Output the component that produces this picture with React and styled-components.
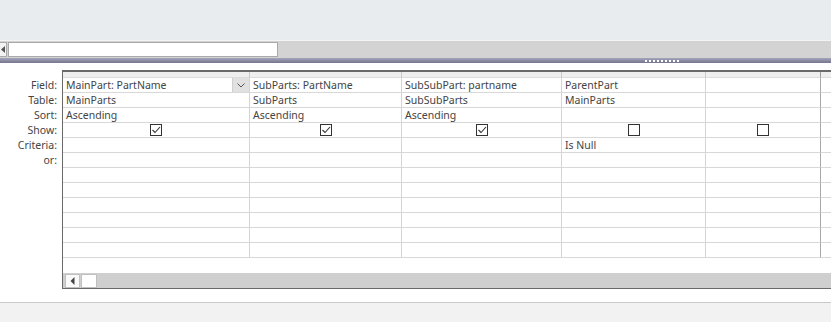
import React from 'react';
import styled, { createGlobalStyle } from 'styled-components';

const GlobalStyle = createGlobalStyle`
  html, body {
    margin: 0;
    padding: 0;
    background: #ffffff;
  }
  body {
    font-family: 'Segoe UI', 'Noto Sans', 'Liberation Sans', sans-serif;
    font-size: 10.5px;
    color: #444444;
  }
`;

const columns = [
  { width: 187, field: 'MainPart: PartName', table: 'MainParts', sort: 'Ascending', show: true, criteria: '', dropdown: true },
  { width: 152, field: 'SubParts: PartName', table: 'SubParts', sort: 'Ascending', show: true, criteria: '' },
  { width: 160, field: 'SubSubPart: partname', table: 'SubSubParts', sort: 'Ascending', show: true, criteria: '' },
  { width: 144, field: 'ParentPart', table: 'MainParts', sort: '', show: false, criteria: 'Is Null' },
  { width: 115, field: '', table: '', sort: '', show: false, criteria: '', dark: true },
  { width: 40, field: '', table: '', sort: '', show: null, criteria: '' },
];

const labels = ['Field:', 'Table:', 'Sort:', 'Show:', 'Criteria:', 'or:'];
const EXTRA_ROWS = 6;

export default function App() {
  return (
    <Page>
      <GlobalStyle />
      <TopStrip />
      <SearchBar>
        <NavButton>
          <svg width="5" height="7" viewBox="0 0 5 7">
            <path d="M4 0 L0 3.5 L4 7 Z" fill="#555" />
          </svg>
        </NavButton>
        <SearchBox />
      </SearchBar>
      <Splitter>
        <Grip>
          {Array.from({ length: 9 }).map((_, i) => <Dot key={i} />)}
        </Grip>
      </Splitter>
      <DesignArea>
        <Labels>
          {labels.map(l => <Label key={l}>{l}</Label>)}
        </Labels>
        <GridBox>
          <Grid $cols={columns.map(c => c.width + 'px').join(' ')}>
            {columns.map((c, i) => <HeaderCell key={'h' + i} $dark={c.dark} />)}
            {columns.map((c, i) => (
              <Cell key={'f' + i} $dark={c.dark}>
                {c.field}
                {c.dropdown && (
                  <DropButton>
                    <svg width="8" height="5" viewBox="0 0 8 5">
                      <path d="M0.5 0.5 L4 4 L7.5 0.5" fill="none" stroke="#555" strokeWidth="1" />
                    </svg>
                  </DropButton>
                )}
              </Cell>
            ))}
            {columns.map((c, i) => <Cell key={'t' + i} $dark={c.dark}>{c.table}</Cell>)}
            {columns.map((c, i) => <Cell key={'s' + i} $dark={c.dark}>{c.sort}</Cell>)}
            {columns.map((c, i) => (
              <Cell key={'w' + i} $dark={c.dark} $center>
                {c.show !== null && (
                  <Check>
                    {c.show && (
                      <svg width="10" height="10" viewBox="0 0 10 10">
                        <path d="M1.5 5 L4 7.5 L9 2" fill="none" stroke="#333" strokeWidth="1.1" />
                      </svg>
                    )}
                  </Check>
                )}
              </Cell>
            ))}
            {columns.map((c, i) => <Cell key={'c' + i} $dark={c.dark}>{c.criteria}</Cell>)}
            {Array.from({ length: EXTRA_ROWS + 1 }).map((_, r) =>
              columns.map((c, i) => <Cell key={'e' + r + '-' + i} $dark={c.dark} />)
            )}
          </Grid>
          <HScroll>
            <ScrollArrow>
              <svg width="5" height="8" viewBox="0 0 5 8">
                <path d="M4.5 0 L0.5 4 L4.5 8 Z" fill="#444" />
              </svg>
            </ScrollArrow>
            <ScrollThumb />
          </HScroll>
        </GridBox>
      </DesignArea>
      <StatusBar />
    </Page>
  );
}

const Page = styled.div`
  width: 831px;
  height: 322px;
  display: flex;
  flex-direction: column;
  overflow: hidden;
  background: #ffffff;
`;

const TopStrip = styled.div`
  height: 40px;
  background: #e9ecef;
  flex-shrink: 0;
`;

const SearchBar = styled.div`
  height: 17px;
  background: #d3d3d3;
  border-top: 1px solid #f4f4f4;
  display: flex;
  align-items: center;
  gap: 1px;
  flex-shrink: 0;
`;

const NavButton = styled.div`
  width: 7px;
  height: 15px;
  background: #f3f3f3;
  border: 1px solid #a9a9a9;
  border-left: none;
  box-sizing: border-box;
  display: flex;
  align-items: center;
  justify-content: center;
`;

const SearchBox = styled.div`
  width: 270px;
  height: 15px;
  background: #ffffff;
  border: 1px solid #a9a9a9;
  box-sizing: border-box;
`;

const Splitter = styled.div`
  height: 5px;
  background: linear-gradient(#a4a4bc, #75758f);
  flex-shrink: 0;
  display: flex;
  align-items: flex-end;
  padding-left: 645px;
  padding-bottom: 1px;
  box-sizing: border-box;
`;

const Grip = styled.div`
  display: flex;
  gap: 2px;
`;

const Dot = styled.span`
  width: 2px;
  height: 2px;
  background: #ffffff;
`;

const DesignArea = styled.div`
  display: flex;
  padding-top: 7px;
  height: 240px;
  flex-shrink: 0;
  box-sizing: border-box;
  border-bottom: 1px solid #c9c9c9;
`;

const Labels = styled.div`
  width: 62px;
  flex-shrink: 0;
  padding-top: 8px;
  display: flex;
  flex-direction: column;
`;

const Label = styled.div`
  height: 15px;
  line-height: 14px;
  text-align: right;
  padding-right: 5px;
  white-space: nowrap;
`;

const GridBox = styled.div`
  flex: 1;
  height: 219px;
  border-top: 2px solid #6a6a6a;
  border-left: 1px solid #6a6a6a;
  border-bottom: 1px solid #6a6a6a;
  box-sizing: border-box;
  display: flex;
  flex-direction: column;
  overflow: hidden;
`;

const Grid = styled.div`
  display: grid;
  grid-template-columns: ${p => p.$cols};
  grid-template-rows: 6px;
  grid-auto-rows: 15px;
  height: 201px;
  flex-shrink: 0;
  align-content: start;
`;

const HeaderCell = styled.div`
  background: #efefef;
  border-right: 1px solid ${p => (p.$dark ? '#9a9a9a' : '#c3ccd4')};
  border-bottom: 1px solid #dcdcdc;
  box-sizing: border-box;
`;

const Cell = styled.div`
  position: relative;
  box-sizing: border-box;
  border-right: 1px solid ${p => (p.$dark ? '#a8a8a8' : '#cdd6de')};
  border-bottom: 1px solid #d8d8d8;
  padding-left: ${p => (p.$center ? '0' : '3px')};
  line-height: 14px;
  white-space: nowrap;
  overflow: hidden;
  display: ${p => (p.$center ? 'flex' : 'block')};
  align-items: center;
  justify-content: center;
`;

const DropButton = styled.div`
  position: absolute;
  top: 0;
  right: 0;
  width: 16px;
  height: 14px;
  background: #e1e1e1;
  border-left: 1px solid #d0d0d0;
  display: flex;
  align-items: center;
  justify-content: center;
`;

const Check = styled.div`
  width: 12px;
  height: 12px;
  border: 1px solid #333333;
  box-sizing: border-box;
  background: #ffffff;
  display: flex;
  align-items: center;
  justify-content: center;
`;

const HScroll = styled.div`
  height: 15px;
  flex-shrink: 0;
  background: #cfcfcf;
  display: flex;
  align-items: center;
  padding-left: 2px;
  gap: 1px;
`;

const ScrollArrow = styled.div`
  width: 15px;
  height: 14px;
  background: #fafafa;
  border: 1px solid #c0c0c0;
  box-sizing: border-box;
  display: flex;
  align-items: center;
  justify-content: center;
`;

const ScrollThumb = styled.div`
  width: 16px;
  height: 14px;
  background: #ffffff;
  border: 1px solid #c0c0c0;
  box-sizing: border-box;
`;

const StatusBar = styled.div`
  flex: 1;
  background: #f2f2f2;
`;
